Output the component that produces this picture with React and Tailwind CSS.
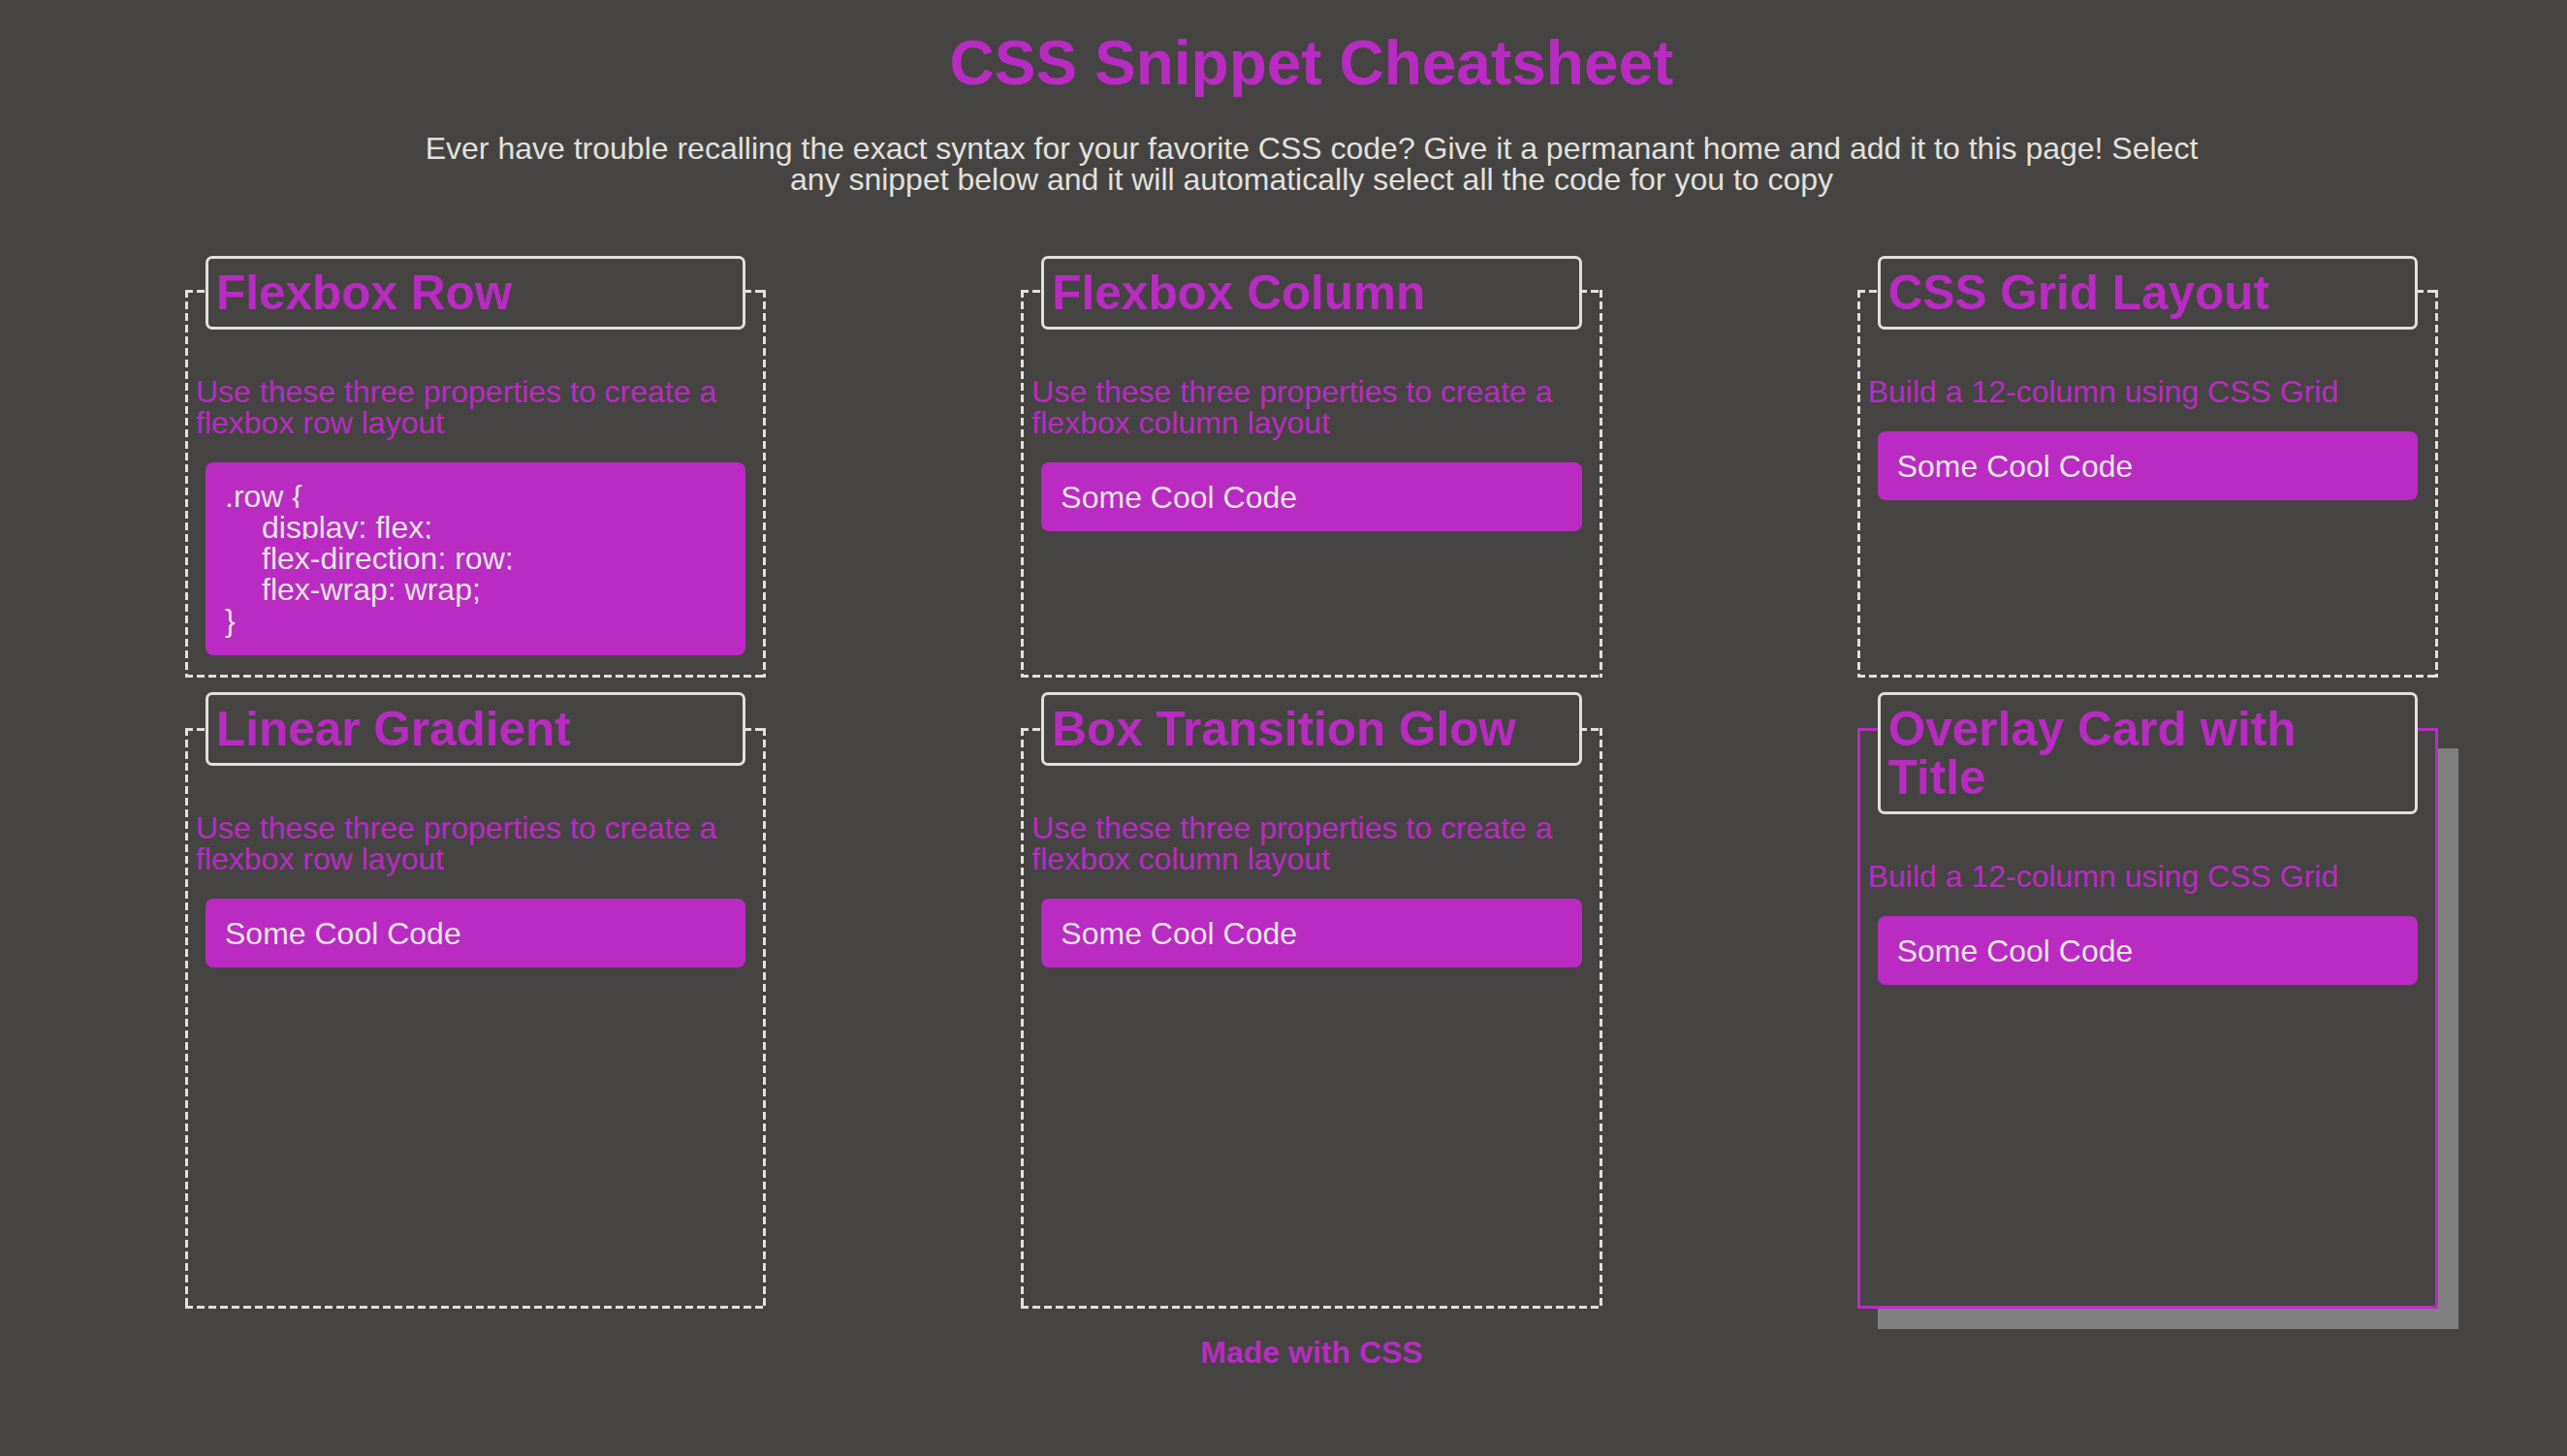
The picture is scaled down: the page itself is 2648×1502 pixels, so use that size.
import React from "react";

const cards = [
  {
    title: "Flexbox Row",
    desc: "Use these three properties to create a flexbox row layout",
    code: [
      { t: ".row {", indent: false },
      { t: "display: flex;", indent: true },
      { t: "flex-direction: row;", indent: true },
      { t: "flex-wrap: wrap;", indent: true },
      { t: "}", indent: false, last: true },
    ],
  },
  {
    title: "Flexbox Column",
    desc: "Use these three properties to create a flexbox column layout",
  },
  {
    title: "CSS Grid Layout",
    desc: "Build a 12-column using CSS Grid",
  },
  {
    title: "Linear Gradient",
    desc: "Use these three properties to create a flexbox row layout",
    row2: true,
  },
  {
    title: "Box Transition Glow",
    desc: "Use these three properties to create a flexbox column layout",
    row2: true,
  },
  {
    title: "Overlay Card with Title",
    desc: "Build a 12-column using CSS Grid",
    overlay: true,
    row2: true,
  },
];

function CodeBlock({ lines }) {
  if (!lines) {
    return (
      <div className="mx-[10px] mt-[25px] rounded-lg bg-[#b92bc2] px-5 py-[19.5px] leading-8 text-[#e6e4e1]">
        Some Cool Code
      </div>
    );
  }
  return (
    <div className="mx-[10px] mt-[25px] flex flex-col rounded-lg bg-[#b92bc2] px-5 pb-[24px] pt-[15px] text-[#e6e4e1]">
      {lines.map((l, i) => {
        let cls = "h-8 leading-[40px] whitespace-pre";
        if (!l.last) cls = "h-8 bg-[#b92bc2] leading-[40px] whitespace-pre";
        if (l.indent) cls = "h-8 bg-[#b92bc2] pl-[38px] leading-[40px] whitespace-pre";
        return (
          <div key={i} className={cls}>
            {l.t}
          </div>
        );
      })}
    </div>
  );
}

function Card({ card }) {
  const frame = card.overlay
    ? "flex flex-col border-[3px] border-solid border-[#b92bc2] px-2 pb-[17px] shadow-[21px_21px_0_#808080]"
    : "flex flex-col bg-no-repeat px-[11px] pb-[20px] [background-image:repeating-linear-gradient(90deg,#e2e0dd_0_8px,transparent_8px_12px),repeating-linear-gradient(90deg,#e2e0dd_0_8px,transparent_8px_12px),repeating-linear-gradient(180deg,#e2e0dd_0_8px,transparent_8px_12px),repeating-linear-gradient(180deg,#e2e0dd_0_8px,transparent_8px_12px)] [background-size:100%_3px,100%_3px,3px_100%,3px_100%] [background-position:0_0,0_100%,0_0,100%_0]";
  const base =
    "mx-[10px] rounded-[7px] border-[3px] border-[#e2e0dd] bg-[#454442] px-2 py-[10px] text-[49.5px] font-bold leading-[50px] text-[#b92bc2]";
  let mt = "-mt-[35px]";
  if (card.row2) mt = "-mt-[37px]";
  if (card.overlay) mt = "-mt-[40px]";
  return (
    <div className={frame}>
      <h2 className={mt + " " + base}>{card.title}</h2>
      <p className="mt-12 leading-8 text-[#b92bc2]">{card.desc}</p>
      <CodeBlock lines={card.code} />
    </div>
  );
}

export default function App() {
  return (
    <div className="min-h-screen bg-[#454442] pl-[58px] font-['Liberation_Sans',Arial,Helvetica,sans-serif] text-[32px] leading-8">
      <h1 className="pt-[33px] text-center text-[64px] font-bold leading-none text-[#b92bc2]">
        CSS Snippet Cheatsheet
      </h1>
      <p className="mx-auto mt-10 max-w-[1850px] text-center leading-8 text-[#e2e0dd]">
        Ever have trouble recalling the exact syntax for your favorite CSS code? Give it a permanant home and add it to this page! Select any snippet below and it will automatically select all the code for you to copy
      </p>
      <div className="mx-auto mt-[98px] grid w-[2324px] grid-cols-3 grid-rows-[400px_599px] gap-x-[263px] gap-y-[52px]">
        {cards.map((c, i) => (
          <Card key={i} card={c} />
        ))}
      </div>
      <footer className="mt-[29px] text-center font-bold leading-8 text-[#b92bc2]">
        Made with CSS
      </footer>
    </div>
  );
}
